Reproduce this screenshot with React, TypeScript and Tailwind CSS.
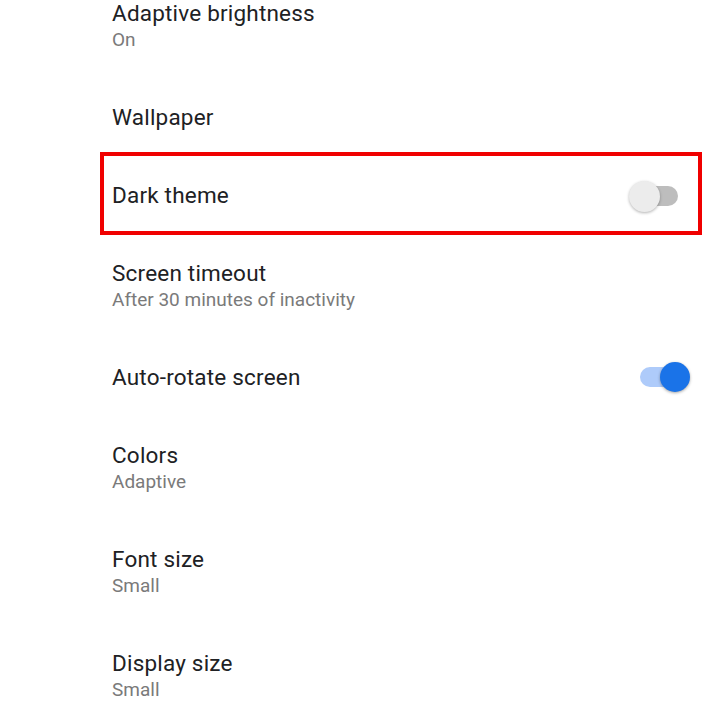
import React from "react"

type Row = { title: string; sub?: string; toggle?: "off" | "on"; highlight?: boolean }

const ROWS: Row[] = [
  { title: "Adaptive brightness", sub: "On" },
  { title: "Wallpaper" },
  { title: "Dark theme", toggle: "off", highlight: true },
  { title: "Screen timeout", sub: "After 30 minutes of inactivity" },
  { title: "Auto-rotate screen", toggle: "on" },
  { title: "Colors", sub: "Adaptive" },
  { title: "Font size", sub: "Small" },
  { title: "Display size", sub: "Small" },
]

function Toggle({ on }: { on: boolean }) {
  if (on) {
    return (
      <div className="relative w-[50px] h-[32px] flex items-center">
        <div className="w-[46px] h-[20px] rounded-full bg-[#aecbfa]" />
        <div className="absolute right-0 top-[1px] w-[30px] h-[30px] rounded-full bg-[#1a73e8] shadow-[0_1px_3px_rgba(0,0,0,0.35)]" />
      </div>
    )
  }
  return (
    <div className="relative w-[50px] h-[32px] flex items-center">
      <div className="w-[48px] h-[20px] rounded-full bg-[#bdbdbd]" />
      <div className="absolute left-[-1px] top-[1px] w-[31px] h-[31px] rounded-full bg-[#ececec] shadow-[0_1px_3px_rgba(0,0,0,0.3)]" />
    </div>
  )
}

export default function App() {
  return (
    <div className="w-[720px] h-[720px] overflow-hidden bg-white" style={{ fontFamily: "Roboto, 'Noto Sans', sans-serif" }}>
      <div className="-mt-[26px] flex flex-col">
        {ROWS.map((r) => (
          <div
            key={r.title}
            className={"relative flex items-center pl-[112px] pr-[30px] " + (r.sub ? "h-[104px]" : "h-[78px]")}
          >
            {r.highlight && (
              <div className="absolute left-[100px] right-[18px] top-[-4px] bottom-[-1px] border-4 border-[#f00000]" />
            )}
            <div className="flex-1 flex flex-col">
              <span className="text-[22.5px] leading-[28px] tracking-[0.2px] text-[#202124]">{r.title}</span>
              {r.sub && <span className="text-[19px] leading-[26px] text-[#7a7a7a]">{r.sub}</span>}
            </div>
            {r.toggle === "off" && (
              <div className="mr-[10px] mt-[1px]">
                <Toggle on={false} />
              </div>
            )}
            {r.toggle === "on" && <Toggle on />}
          </div>
        ))}
      </div>
    </div>
  )
}
